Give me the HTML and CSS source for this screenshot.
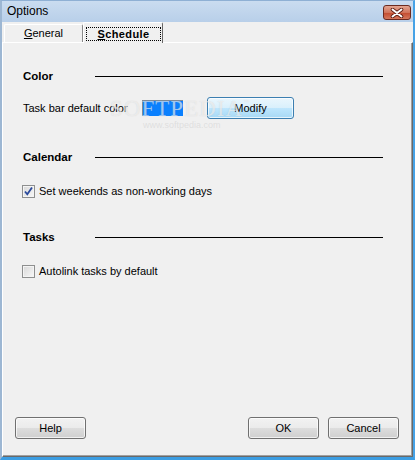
FILE: index.html
```html
<!DOCTYPE html>
<html lang="en">
<head>
  <meta charset="UTF-8">
  <title>Options</title>
  <link rel="stylesheet" href="styles.css">
</head>
<body>
  <div class="window">
    <div class="titlebar">
      <span class="title">Options</span>
      <button class="close" aria-label="Close">
        <svg width="14" height="10" viewBox="0 0 14 10">
          <path d="M2.5 1.5 L11.5 8.5 M11.5 1.5 L2.5 8.5" stroke="#5a1a10" stroke-width="3.6" stroke-linecap="round"/>
          <path d="M2.5 1.5 L11.5 8.5 M11.5 1.5 L2.5 8.5" stroke="#fff" stroke-width="2" stroke-linecap="round"/>
        </svg>
      </button>
    </div>

    <div class="tabs">
      <div class="tab"><u>G</u>eneral</div>
      <div class="tab active"><span class="focus"><u>S</u>chedule</span></div>
    </div>

    <div class="panel">
      <div class="group">
        <div class="heading"><span>Color</span><i class="rule"></i></div>
        <div class="row">
          <span class="label">Task bar default color</span>
          <span class="swatch"></span>
          <button class="btn hot modify">Modify</button>
        </div>
      </div>

      <div class="group">
        <div class="heading"><span>Calendar</span><i class="rule"></i></div>
        <label class="check">
          <span class="box checked">
            <svg width="11" height="11" viewBox="0 0 11 11">
              <path d="M2 5.5 L4.3 8.3 L9 1.5" fill="none" stroke="#2b4a9c" stroke-width="1.8"/>
            </svg>
          </span>
          Set weekends as non-working days
        </label>
      </div>

      <div class="group">
        <div class="heading"><span>Tasks</span><i class="rule"></i></div>
        <label class="check">
          <span class="box"></span>
          Autolink tasks by default
        </label>
      </div>

      <div class="footer">
        <button class="btn">Help</button>
        <span class="spacer"></span>
        <button class="btn">OK</button>
        <button class="btn">Cancel</button>
      </div>

      <div class="watermark">SOFTPEDIA<sup>™</sup><small>www.softpedia.com</small></div>
    </div>
  </div>
</body>
</html>
```

FILE: styles.css
```css
* { box-sizing: border-box; }
body {
  margin: 0;
  font-family: 'Liberation Sans', Arial, sans-serif;
  font-size: 11px;
  color: #000;
  background: #f0f0f0;
}
.window {
  width: 415px; height: 460px;
  display: flex; flex-direction: column;
  background: #f0f0f0;
  border-top: 1px solid #8fb0d4;
  border-left: 2px solid #9db7d3;
  border-right: 2px solid #46a2e6;
  border-bottom: 3px solid #3c9de2;
}
.titlebar {
  height: 21px; flex: none;
  display: flex; align-items: flex-start; justify-content: space-between;
  background: linear-gradient(#cadcf0, #b8cfe9);
  padding: 0 2px 0 5px;
}
.title {
  font-size: 12px; line-height: 21px; color: #000;
}
.close {
  margin-top: 4px;
  width: 28px; height: 15px; padding: 0;
  border: 1px solid #6b2a20; border-radius: 3px;
  background: linear-gradient(#e3a592, #d1745b 50%, #c24a2e 51%, #d5775c);
  display: flex; align-items: center; justify-content: center;
}
.tabs {
  height: 20px; flex: none;
  display: flex; align-items: flex-end;
  padding-left: 2px;
}
.tab {
  height: 18px; width: 79px;
  border-top: 1px solid #fff; border-left: 1px solid #fff;
  border-right: 1px solid #8a8a8a;
  border-radius: 2px 2px 0 0;
  text-align: center; line-height: 17px;
  background: #f0f0f0;
}
.tab.active {
  position: relative; z-index: 1;
  height: 21px; width: 80px;
  margin-bottom: -1px;
  border-right-color: #696969;
  font-weight: bold;
}
.focus {
  display: block;
  height: 14px; margin: 4px 1px 0 2px;
  border: 1px dotted #000;
  line-height: 12px;
  letter-spacing: 0.4px;
}
.panel {
  position: relative;
  flex: 1;
  display: flex; flex-direction: column;
  border-top: 1px solid #fff; border-left: 1px solid #fff;
  border-right: 1px solid #696969; border-bottom: 1px solid #696969;
  box-shadow: inset -1px -1px 0 #a0a0a0;
  padding: 26px 0 17px;
}
.group + .group { margin-top: 31px; }
.heading {
  height: 14px;
  display: flex; align-items: center;
  padding: 0 29px 0 20px;
}
.heading span { width: 72px; font-weight: bold; font-size: 11.5px; }
.rule { flex: 1; height: 1px; background: #000; }
.row {
  margin-top: 14px; height: 22px;
  display: flex; align-items: center;
  padding-left: 20px;
}
.label { width: 119px; }
.swatch {
  width: 41px; height: 16px;
  background: #0a80fe;
  border-top: 1px solid #7d8a99; border-left: 1px solid #7d8a99;
}
.btn {
  width: 71px; height: 22px; padding: 0;
  font: inherit; color: #000;
  border: 1px solid #707070; border-radius: 3px;
  background: linear-gradient(#f2f2f2, #ebebeb 50%, #dddddd 51%, #cfcfcf);
  box-shadow: inset 0 0 0 1px rgba(255, 255, 255, 0.7);
}
.btn.hot {
  border-color: #3c7fb1;
  background: linear-gradient(#eaf6fd, #d9f0fc 50%, #bee6fd 51%, #a7d9f5);
}
.modify { width: 87px; height: 22px; margin-left: 24px; }
.check {
  margin-top: 19px; height: 16px;
  display: flex; align-items: center; gap: 4px;
  padding-left: 19px;
}
.box {
  width: 13px; height: 13px;
  border: 1px solid #8e8f8f;
  background: linear-gradient(135deg, #d8d8d8, #f8f8f8);
  box-shadow: inset 0 0 0 1px #f4f4f4;
  display: flex; align-items: center; justify-content: center;
}
.footer {
  margin-top: auto;
  display: flex; gap: 9px;
  padding: 0 13px 0 12px;
}
.spacer { flex: 1; }
.watermark {
  position: absolute; left: 107px; top: 53px;
  font-family: 'Liberation Serif', serif; font-size: 23px; letter-spacing: 1px;
  color: rgba(255, 255, 255, 0.55);
  text-shadow: 0 0 1px rgba(150, 150, 150, 0.35);
  pointer-events: none;
}
.watermark sup { font-family: 'Liberation Sans', sans-serif; font-size: 6px; vertical-align: 12px; }
.watermark small {
  display: block; margin: -2px 0 0 33px;
  font-family: 'Liberation Sans', sans-serif; font-size: 9px; letter-spacing: 0;
  color: rgba(200, 200, 200, 0.45); text-shadow: none;
}
```
